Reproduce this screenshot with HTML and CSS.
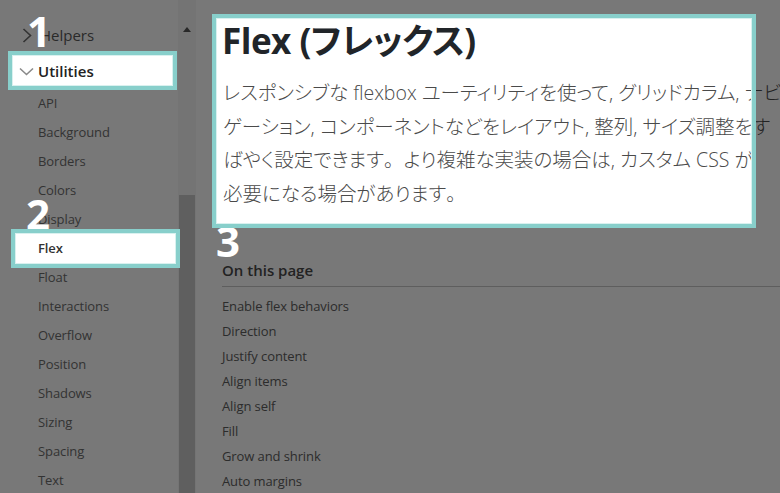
FILE: index.html
```html
<!DOCTYPE html>
<html lang="ja">
<head>
<meta charset="utf-8">
<title>Flex</title>
<link rel="stylesheet" href="styles.css">
</head>
<body>
<div class="page">
  <aside class="sidebar">
    <nav class="nav">
      <div class="group">
        <svg class="chev-right" width="10" height="15" viewBox="0 0 10 15"><path d="M1.5 1 L8.5 7.5 L1.5 14" fill="none" stroke="#6c6c6c" stroke-width="1.6"/></svg>
        <span class="group-name">Helpers</span>
      </div>
      <div class="group open">
        <svg class="chev-down" width="15" height="9" viewBox="0 0 15 9"><path d="M1 1.5 L7.5 7.5 L14 1.5" fill="none" stroke="#8a8a8a" stroke-width="1.6"/></svg>
        <span class="group-name">Utilities</span>
      </div>
      <ul class="links">
        <li>API</li>
        <li>Background</li>
        <li>Borders</li>
        <li>Colors</li>
        <li>Display</li>
        <li class="active">Flex</li>
        <li>Float</li>
        <li>Interactions</li>
        <li>Overflow</li>
        <li>Position</li>
        <li>Shadows</li>
        <li>Sizing</li>
        <li>Spacing</li>
        <li>Text</li>
      </ul>
    </nav>
    <div class="scrollbar">
      <div class="arrow"></div>
      <div class="track"></div>
      <div class="thumb"></div>
    </div>
  </aside>
  <main class="content">
    <h1 class="title">Flex (フレックス)</h1>
    <p class="lead">レスポンシブな flexbox ユーティリティを使って, グリッドカラム, ナビ<br>ゲーション, コンポーネントなどをレイアウト, 整列, サイズ調整をす<br>ばやく設定できます<span class="full">。</span>より複雑な実装の場合は, カスタム CSS が<br>必要になる場合があります<span class="full">。</span></p>
    <section class="toc">
      <h2 class="toc-title">On this page</h2>
      <ul class="toc-list">
        <li>Enable flex behaviors</li>
        <li>Direction</li>
        <li>Justify content</li>
        <li>Align items</li>
        <li>Align self</li>
        <li>Fill</li>
        <li>Grow and shrink</li>
        <li>Auto margins</li>
      </ul>
    </section>
  </main>
</div>
<div class="dim">
  <span class="num num-1">1</span>
  <span class="num num-2">2</span>
  <span class="num num-3">3</span>
</div>
<div class="hl hl-1"></div>
<div class="hl hl-2"></div>
<div class="hl hl-3"></div>
</body>
</html>
```
FILE: styles.css
```css
html, body {
  margin: 0;
  padding: 0;
  width: 780px;
  height: 493px;
  overflow: hidden;
  background: #fff;
}
body {
  position: relative;
  font-family: "Open Sans", "Noto Sans CJK JP", sans-serif;
  color: #212529;
}
.page {
  display: flex;
  height: 493px;
}
.sidebar {
  display: flex;
  width: 196px;
  flex: none;
}
.nav {
  width: 178px;
  padding-top: 17px;
}
.group {
  height: 36px;
  display: flex;
  align-items: center;
  font-size: 15px;
  color: #5a5a5a;
}
.chev-right {
  margin-left: 22px;
  margin-right: 8px;
}
.group.open {
  color: #222;
  font-weight: 600;
}
.chev-down {
  margin-left: 19px;
  margin-right: 4px;
}
.links {
  list-style: none;
  margin: 0;
  padding: 0;
}
.links li {
  height: 29px;
  line-height: 29px;
  padding-left: 38px;
  font-size: 13px;
  letter-spacing: -0.1px;
  color: #6e6e6e;
}
.links li.active {
  color: #333;
  font-weight: 600;
}
.scrollbar {
  width: 18px;
  display: flex;
  flex-direction: column;
  background: #f7f7f7;
}
.arrow {
  height: 17px;
  margin-top: 20px;
  display: flex;
  justify-content: center;
}
.arrow::before {
  content: "";
  width: 0;
  height: 0;
  border-left: 4.5px solid transparent;
  border-right: 4.5px solid transparent;
  border-bottom: 5px solid #555;
  margin-top: 7px;
}
.track {
  height: 158px;
}
.thumb {
  flex: 1;
  margin: 0 1px;
  background: #c9c9c9;
}
.content {
  flex: 1;
  padding-left: 26px;
  min-width: 0;
}
.title {
  margin: 16px 0 0;
  font-size: 35px;
  line-height: 50px;
  font-weight: 700;
  letter-spacing: -0.5px;
  font-feature-settings: "palt";
  white-space: nowrap;
}
.lead {
  margin: 10px 0 0 1px;
  font-size: 19.5px;
  line-height: 33.5px;
  font-weight: 300;
  color: #4a4a4a;
  white-space: nowrap;
  font-feature-settings: "palt";
}
.lead .full {
  font-feature-settings: normal;
}
.toc {
  margin-top: 50px;
}
.toc-title {
  margin: 0;
  font-size: 15px;
  font-weight: 600;
  line-height: 20px;
  color: #4a4a4a;
  padding-bottom: 6px;
  border-bottom: 1px solid #c8c8c8;
}
.toc-list {
  list-style: none;
  margin: 7px 0 0;
  padding: 0;
}
.toc-list li {
  height: 25px;
  line-height: 25px;
  font-size: 13px;
  letter-spacing: -0.1px;
  color: #5e5e5e;
}
.dim {
  position: absolute;
  left: 0;
  top: 0;
  width: 780px;
  height: 493px;
  background: rgba(0, 0, 0, 0.53);
  clip-path: path(evenodd, "M0 0H780V493H0Z M8 51H177V90H8Z M11 229H180V268H11Z M212 14H756V228H212Z");
}
.num {
  position: absolute;
  color: #fff;
  font-family: "Open Sans", sans-serif;
  font-weight: 700;
  font-size: 42px;
  line-height: 42px;
}
.num-1 { left: 27px; top: 10px; }
.num-2 { left: 26px; top: 193px; }
.num-3 { left: 216px; top: 220px; }
.hl {
  position: absolute;
  border: 4px solid #88cfcb;
  box-shadow: inset 0 0 0 1px #d9f1ef;
  box-sizing: border-box;
}
.hl-1 { left: 8px; top: 51px; width: 169px; height: 39px; }
.hl-2 { left: 11px; top: 229px; width: 169px; height: 39px; }
.hl-3 { left: 212px; top: 14px; width: 544px; height: 214px; }
```
